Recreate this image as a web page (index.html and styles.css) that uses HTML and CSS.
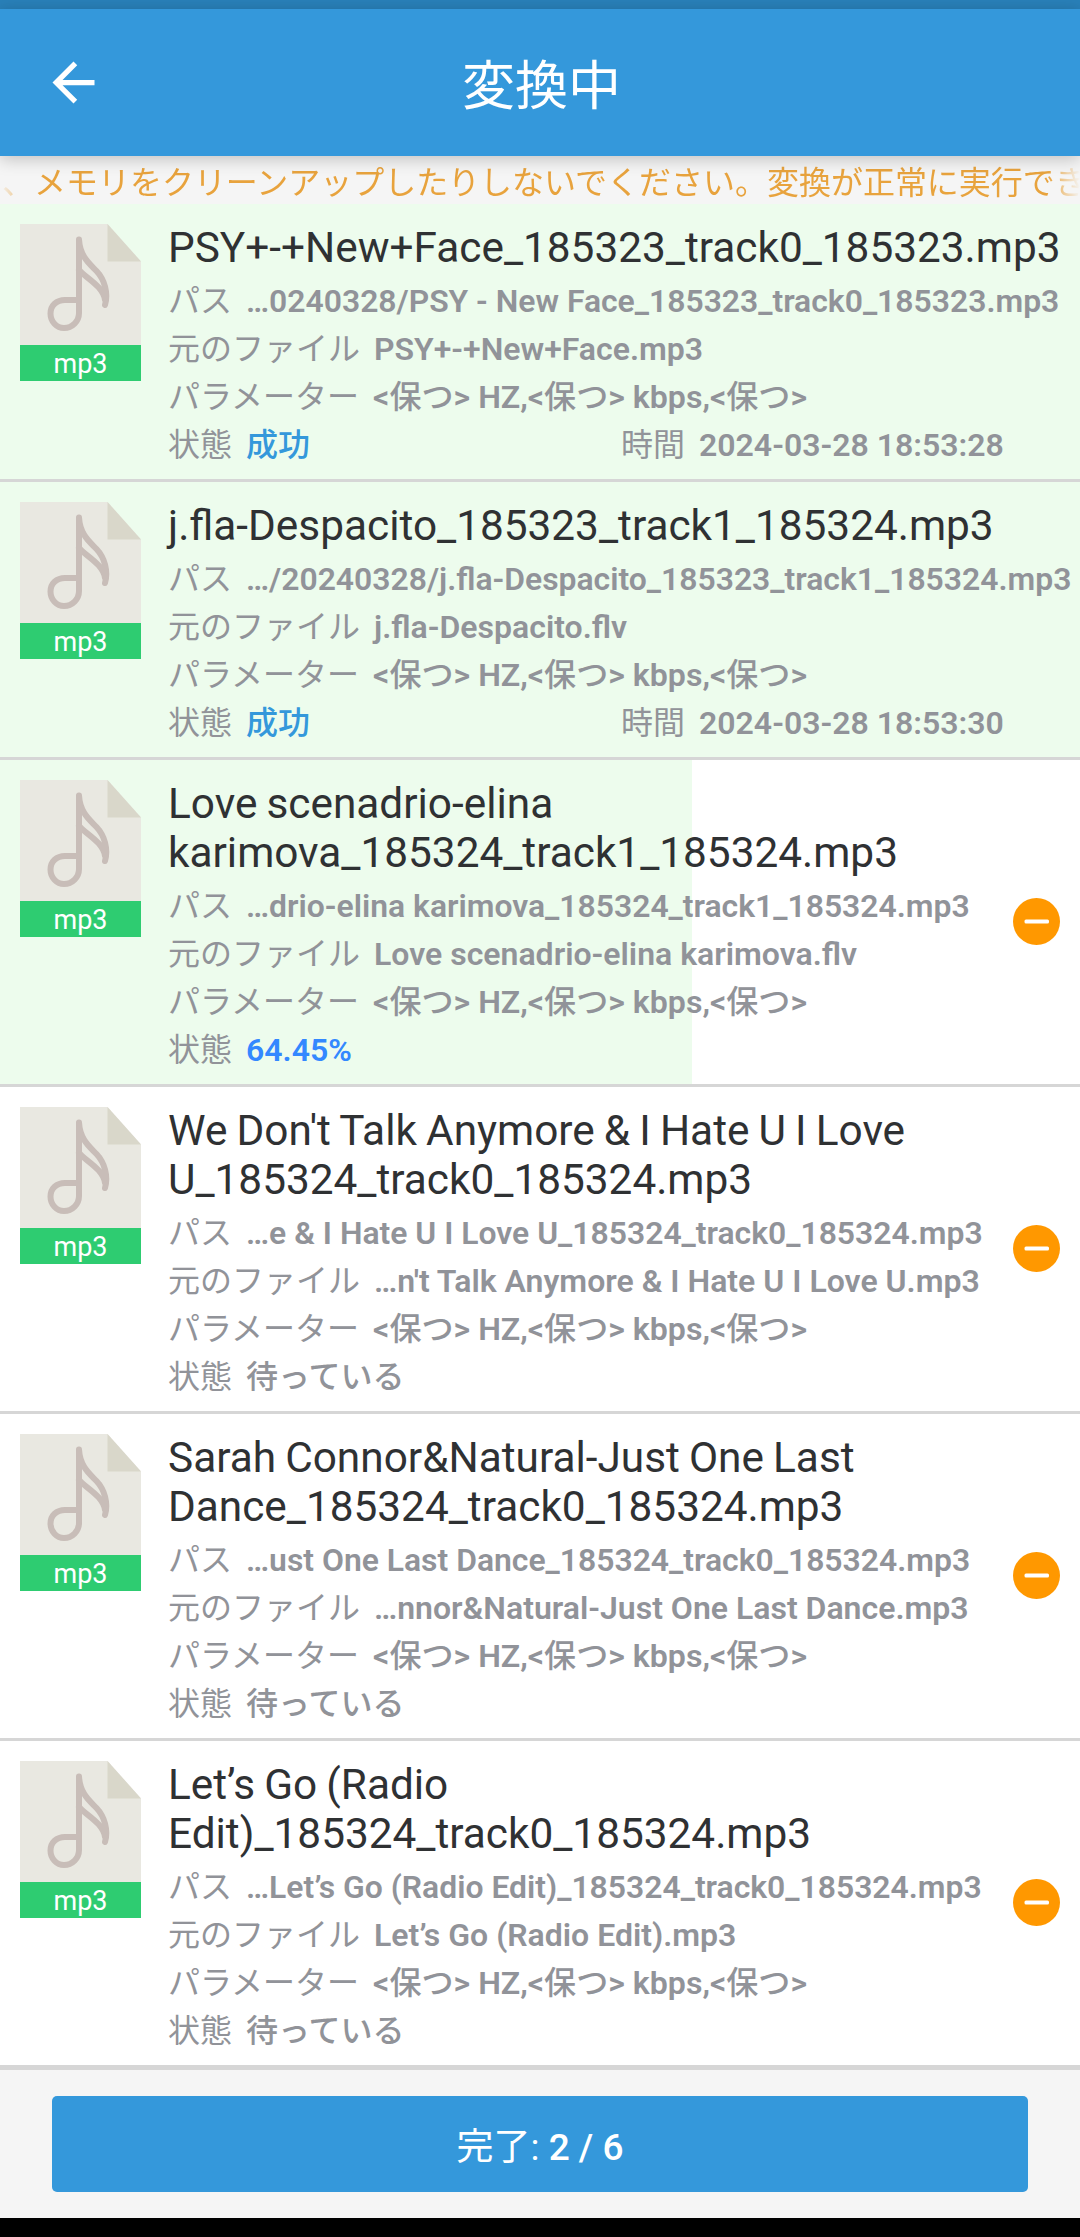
FILE: index.html
```html
<!DOCTYPE html>
<html lang="ja">
<head>
    <meta charset="UTF-8">
    <meta name="viewport" content="width=device-width, initial-scale=1.0">
    <title>変換中</title>
    <link rel="stylesheet" href="styles.css">
</head>
<body>
    <!-- shared icons -->
    <svg class="sprite" aria-hidden="true">
        <symbol id="note" viewBox="0 0 121 121">
            <path d="M0 0H87.5L121 37.5V121H0Z" fill="#e9e8e1"/>
            <path d="M87.5 0L121 37.5H87.5Z" fill="#d9d7ca"/>
            <path d="M59 15.5V89A15 15 0 0 1 44 104C36.500 104 30.500 97.500 30.500 89.500C30.500 81.500 36.500 76 45 76H59M59 15.500C60 33 70 40 76.500 47C84.500 55.500 88.500 69 85 81M59 46C66 54 83 62 85 76" fill="none" stroke="#c8bdb8" stroke-width="6" stroke-linecap="round" stroke-linejoin="round"/>
        </symbol>
        <symbol id="minus" viewBox="0 0 47 47">
            <circle cx="23.5" cy="23.5" r="23.5" fill="#ff9800"/>
            <rect x="11.5" y="21.500" width="24.500" height="4" rx="1.500" fill="#fff"/>
        </symbol>
    </svg>

    <div class="status-bar"></div>
    <header class="header">
        <a class="back" href="#" aria-label="戻る">
            <svg viewBox="0 0 24 24"><path d="M20 11H7.830l5.590-5.590L12 4l-8 8 8 8 1.410-1.410L7.830 13H20v-2z" fill="#fff"/></svg>
        </a>
        <h1>変換中</h1>
    </header>
    <div class="notice"><p>、メモリをクリーンアップしたりしないでください。変換が正常に実行でき</p></div>

    <ul class="list">
        <li class="item done">
            <div class="file"><svg><use href="#note"/></svg><span>mp3</span></div>
            <div class="info">
                <h2>PSY+-+New+Face_185323_track0_185323.mp3</h2>
                <p class="path"><span>パス</span><b>…0240328/PSY - New Face_185323_track0_185323.mp3</b></p>
                <p><span>元のファイル</span><b>PSY+-+New+Face.mp3</b></p>
                <p class="params"><span>パラメーター</span><b>&lt;保つ&gt; HZ,&lt;保つ&gt; kbps,&lt;保つ&gt;</b></p>
                <div class="row">
                    <p><span>状態</span><b class="success">成功</b></p>
                    <p><span>時間</span><b>2024-03-28 18:53:28</b></p>
                </div>
            </div>
        </li>
        <li class="item done">
            <div class="file"><svg><use href="#note"/></svg><span>mp3</span></div>
            <div class="info">
                <h2>j.fla-Despacito_185323_track1_185324.mp3</h2>
                <p class="path"><span>パス</span><b>…/20240328/j.fla-Despacito_185323_track1_185324.mp3</b></p>
                <p><span>元のファイル</span><b>j.fla-Despacito.flv</b></p>
                <p class="params"><span>パラメーター</span><b>&lt;保つ&gt; HZ,&lt;保つ&gt; kbps,&lt;保つ&gt;</b></p>
                <div class="row">
                    <p><span>状態</span><b class="success">成功</b></p>
                    <p><span>時間</span><b>2024-03-28 18:53:30</b></p>
                </div>
            </div>
        </li>
        <li class="item">
            <div class="progress" style="width: 64.10%;"></div>
            <div class="file"><svg><use href="#note"/></svg><span>mp3</span></div>
            <div class="info">
                <h2>Love scenadrio-elina karimova_185324_track1_185324.mp3</h2>
                <p class="path"><span>パス</span><b>…drio-elina karimova_185324_track1_185324.mp3</b></p>
                <p><span>元のファイル</span><b>Love scenadrio-elina karimova.flv</b></p>
                <p class="params"><span>パラメーター</span><b>&lt;保つ&gt; HZ,&lt;保つ&gt; kbps,&lt;保つ&gt;</b></p>
                <p><span>状態</span><b class="percent">64.45%</b></p>
            </div>
            <button class="remove" aria-label="削除"><svg><use href="#minus"/></svg></button>
        </li>
        <li class="item">
            <div class="file"><svg><use href="#note"/></svg><span>mp3</span></div>
            <div class="info">
                <h2>We Don't Talk Anymore &amp; I Hate U I Love U_185324_track0_185324.mp3</h2>
                <p class="path"><span>パス</span><b>…e &amp; I Hate U I Love U_185324_track0_185324.mp3</b></p>
                <p><span>元のファイル</span><b>…n't Talk Anymore &amp; I Hate U I Love U.mp3</b></p>
                <p class="params"><span>パラメーター</span><b>&lt;保つ&gt; HZ,&lt;保つ&gt; kbps,&lt;保つ&gt;</b></p>
                <p><span>状態</span><b>待っている</b></p>
            </div>
            <button class="remove" aria-label="削除"><svg><use href="#minus"/></svg></button>
        </li>
        <li class="item">
            <div class="file"><svg><use href="#note"/></svg><span>mp3</span></div>
            <div class="info">
                <h2>Sarah Connor&amp;Natural-Just One Last Dance_185324_track0_185324.mp3</h2>
                <p class="path"><span>パス</span><b>…ust One Last Dance_185324_track0_185324.mp3</b></p>
                <p><span>元のファイル</span><b>…nnor&amp;Natural-Just One Last Dance.mp3</b></p>
                <p class="params"><span>パラメーター</span><b>&lt;保つ&gt; HZ,&lt;保つ&gt; kbps,&lt;保つ&gt;</b></p>
                <p><span>状態</span><b>待っている</b></p>
            </div>
            <button class="remove" aria-label="削除"><svg><use href="#minus"/></svg></button>
        </li>
        <li class="item">
            <div class="file"><svg><use href="#note"/></svg><span>mp3</span></div>
            <div class="info">
                <h2>Let’s Go (Radio Edit)_185324_track0_185324.mp3</h2>
                <p class="path"><span>パス</span><b>…Let’s Go (Radio Edit)_185324_track0_185324.mp3</b></p>
                <p><span>元のファイル</span><b>Let’s Go (Radio Edit).mp3</b></p>
                <p class="params"><span>パラメーター</span><b>&lt;保つ&gt; HZ,&lt;保つ&gt; kbps,&lt;保つ&gt;</b></p>
                <p><span>状態</span><b>待っている</b></p>
            </div>
            <button class="remove" aria-label="削除"><svg><use href="#minus"/></svg></button>
        </li>
    </ul>

    <footer class="footer">
        <button class="complete">完了: <b>2 / 6</b></button>
    </footer>
    <div class="nav-bar"></div>
</body>
</html>
```
FILE: styles.css
```css
* {
    box-sizing: border-box;
    margin: 0;
    padding: 0;
}
body {
    width: 1080px;
    font-family: Roboto, "Noto Sans CJK JP", sans-serif;
    font-size: 32px;
    color: #919399;
    background-color: #f5f5f5;
}
b {
    font-weight: 500;
}
svg {
    display: block;
    width: 100%;
    height: 100%;
}
button {
    border: none;
    background: none;
    font-family: inherit;
    cursor: pointer;
}
.sprite {
    display: none;
}
.status-bar {
    height: 9px;
    background-color: #2980b9;
}
.header {
    position: relative;
    z-index: 1;
    display: grid;
    grid-template-columns: 63px 1fr 63px;
    align-items: center;
    height: 147px;
    padding: 0 42px;
    color: #fff;
    background-color: #3498db;
    box-shadow: 0 3px 16px rgba(0, 0, 0, .22);
}
.back {
    height: 63px;
}
.header h1 {
    padding: 9px 0 0 3px;
    font-size: 53px;
    font-weight: 400;
    line-height: 63px;
    text-align: center;
}
.notice {
    height: 48px;
    overflow: hidden;
    color: #e8a33d;
    line-height: 54px;
    white-space: nowrap;
    -webkit-mask-image: linear-gradient(to right, transparent, #000 32px, #000 1048px, transparent);
    mask-image: linear-gradient(to right, transparent, #000 32px, #000 1048px, transparent);
}
.notice p {
    padding-left: 2px;
    letter-spacing: -.02px;
}
.list {
    list-style: none;
    background-color: #fff;
    border-bottom: 2px solid #d6d6d6;
}
.item {
    position: relative;
    display: flex;
    border-bottom: 3px solid #d6d6d6;
}
.item.done {
    background-color: #edfced;
}
.progress {
    position: absolute;
    top: 0;
    bottom: 0;
    left: 0;
    background-color: #edfced;
}
.file {
    position: relative;
    flex: none;
    width: 121px;
    margin: 20px 27px 0 20px;
}
.file svg {
    height: 121px;
}
.file span {
    display: block;
    height: 36px;
    color: #fff;
    font-size: 27px;
    line-height: 39px;
    text-align: center;
    background-color: #2ecc71;
}
.info {
    position: relative;
    flex: 1;
    min-width: 0;
    padding: 19px 6px 10px 0;
}
.info h2 {
    margin-bottom: 5px;
    color: #2f3133;
    font-size: 42.35px;
    font-weight: 400;
    line-height: 49px;
    word-spacing: -1.4px;
}
.info p {
    display: flex;
    gap: 14px;
    line-height: 48px;
    white-space: nowrap;
}
.info p b {
    font-family: Roboto, "Noto Sans CJK JP Medium", "Noto Sans CJK JP", sans-serif;
    font-weight: 600;
}
.info .path b {
    font-size: 31.88px;
}
.info .params b {
    font-size: 32.1px;
}
.row {
    display: grid;
    grid-template-columns: 1fr 1fr;
}
.info .success {
    color: #3498db;
}
.info .percent {
    color: #3388ff;
}
.remove {
    position: relative;
    flex: none;
    align-self: center;
    width: 47px;
    height: 47px;
    margin: 0 20px 2px 22px;
}
.footer {
    height: 148px;
    padding: 26px 52px;
}
.complete {
    width: 100%;
    height: 96px;
    padding-bottom: 1px;
    color: #fff;
    font-size: 37px;
    background-color: #3498db;
    border-radius: 5px;
}
.nav-bar {
    height: 19px;
    background-color: #000;
}
```
